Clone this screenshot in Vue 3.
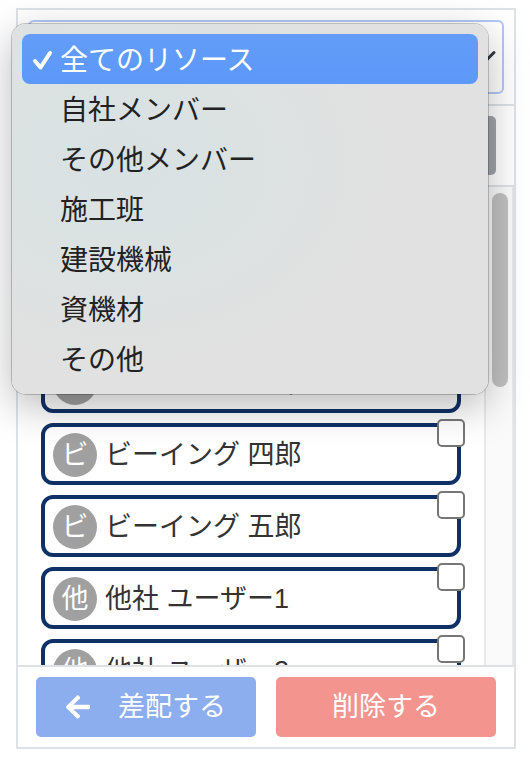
<script setup>
import { ref } from 'vue'

const categories = [
  '全てのリソース',
  '自社メンバー',
  'その他メンバー',
  '施工班',
  '建設機械',
  '資機材',
  'その他',
]
const selected = ref(categories[0])

const resources = ref([
  { id: 1, name: 'ビーイング 一郎', checked: false },
  { id: 2, name: 'ビーイング 二郎', checked: false },
  { id: 3, name: 'ビーイング 三郎', checked: false },
  { id: 4, name: 'ビーイング 四郎', checked: false },
  { id: 5, name: 'ビーイング 五郎', checked: false },
  { id: 6, name: '他社 ユーザー1', checked: false },
  { id: 7, name: '他社 ユーザー2', checked: false },
])
</script>

<template>
  <main class="page">
    <section class="panel">
      <div class="filter">
        <div class="field">
          <select v-model="selected" class="select" aria-label="リソース">
            <option v-for="c in categories" :key="c">{{ c }}</option>
          </select>
          <svg class="chevron" viewBox="0 0 16 16" aria-hidden="true">
            <path d="m2 5 6 6 6-6" />
          </svg>
          <div class="menu" role="listbox">
            <button
              v-for="c in categories"
              :key="c"
              type="button"
              role="option"
              class="option"
              :class="{ active: c === selected }"
              :aria-selected="c === selected"
              @click="selected = c"
            >
              <span class="tick">
                <svg v-if="c === selected" viewBox="0 0 22 22" aria-hidden="true">
                  <path d="M3 11 8.5 17.5 18 3" />
                </svg>
              </span>
              <span>{{ c }}</span>
            </button>
          </div>
        </div>
      </div>

      <div class="toolbar">
        <button type="button" class="tool" aria-label="検索"></button>
      </div>

      <div class="list">
        <ul class="cards">
          <li v-for="r in resources" :key="r.id" class="card">
            <label class="person" :for="'r' + r.id">
              <span class="avatar">{{ r.name[0] }}</span>
              <span class="name">{{ r.name }}</span>
            </label>
            <input :id="'r' + r.id" v-model="r.checked" type="checkbox" class="check" />
          </li>
        </ul>
        <div class="track"><div class="thumb"></div></div>
      </div>

      <footer class="actions">
        <button type="button" class="action assign">
          <svg class="arrow" viewBox="0 0 448 512" aria-hidden="true">
            <path d="M257.5 445.1l-22.2 22.2c-9.4 9.4-24.6 9.4-33.9 0L7 273c-9.4-9.4-9.4-24.6 0-33.9L201.4 44.7c9.4-9.4 24.6-9.4 33.9 0l22.2 22.2c9.5 9.5 9.3 25-.4 34.3L136.6 216H424c13.3 0 24 10.7 24 24v32c0 13.3-10.7 24-24 24H136.6l120.5 114.8c9.8 9.3 10 24.8.4 34.3z" />
          </svg>
          <span>差配する</span>
        </button>
        <button type="button" class="action remove">削除する</button>
      </footer>
    </section>
  </main>
</template>

<style>
body {
  background: #fff;
}
</style>

<style scoped>
.page,
.page * {
  box-sizing: border-box;
}
.page {
  display: flex;
  height: 100vh;
  min-height: 560px;
  padding: 8px 14px 19px 16px;
  overflow: hidden;
  font-family: "Liberation Sans", "Noto Sans CJK JP", sans-serif;
  color: #333;
}
button {
  border: 0;
  margin: 0;
  padding: 0;
  font: inherit;
  color: inherit;
  background: none;
  cursor: pointer;
}
.panel {
  flex: 1;
  min-width: 0;
  display: flex;
  flex-direction: column;
  border: 2px solid #dee2e6;
}
.filter {
  padding: 10px;
  border-bottom: 2px solid #dee2e6;
}
.field {
  position: relative;
  display: flex;
}
.select {
  appearance: none;
  flex: 1;
  min-width: 0;
  height: 74px;
  padding: 0 24px;
  border: 2px solid #b0c8f5;
  border-radius: 6px;
  background: #fff;
  font: inherit;
  font-size: 27px;
  color: #333;
}
.chevron {
  position: absolute;
  top: 25px;
  right: 7px;
  width: 24px;
  height: 24px;
  fill: none;
  stroke: #343a40;
  stroke-width: 2;
  stroke-linecap: round;
  stroke-linejoin: round;
  pointer-events: none;
}
.menu {
  position: absolute;
  z-index: 2;
  top: 4px;
  left: -16px;
  right: 16px;
  display: flex;
  flex-direction: column;
  padding: 10px;
  border-radius: 14px;
  background: radial-gradient(ellipse 260px 200px at 110px 140px, #d8e1e3 0%, #dce2e2 50%, #e1e1e1 100%);
  box-shadow: 0 0 0 1px rgba(0, 0, 0, 0.2), 0 12px 40px rgba(0, 0, 0, 0.28);
}
.option {
  display: flex;
  align-items: center;
  height: 50px;
  padding: 4px 10px 0;
  border-radius: 8px;
  font-size: 28px;
  line-height: 46px;
  color: #222;
  text-align: left;
  white-space: nowrap;
}
.option.active {
  background: linear-gradient(#639df8, #5c98f9);
  color: #fff;
}
.tick {
  display: flex;
  flex: none;
  width: 28px;
}
.tick svg {
  width: 22px;
  height: 22px;
  fill: none;
  stroke: #fff;
  stroke-width: 4;
  stroke-linecap: round;
  stroke-linejoin: round;
}
.toolbar {
  display: flex;
  padding: 10px 18px;
  border-bottom: 2px solid #dee2e6;
}
.tool {
  flex: 1;
  height: 59px;
  border-radius: 5px;
  background: #a0a5aa;
}
.list {
  flex: 1;
  min-height: 0;
  display: grid;
  grid-template-columns: minmax(0, 1fr) 30px;
  overflow: hidden;
}
.cards {
  display: flex;
  flex-direction: column;
  gap: 10px;
  min-height: 0;
  margin: 0;
  padding: 20px 23px;
  overflow: hidden;
  list-style: none;
}
.card {
  position: relative;
  flex: none;
  border: 4px solid #0f3166;
  border-radius: 12px;
  background: #fff;
}
.person {
  display: flex;
  align-items: center;
  gap: 8px;
  height: 54px;
  padding: 2px 8px 0;
}
.avatar {
  flex: none;
  width: 44px;
  height: 44px;
  border-radius: 50%;
  background: #a0a0a0;
  color: #fff;
  font-size: 27px;
  line-height: 44px;
  text-align: center;
}
.name {
  overflow: hidden;
  font-size: 27px;
  line-height: 44px;
  white-space: nowrap;
  text-overflow: ellipsis;
}
.check {
  appearance: none;
  position: absolute;
  top: -8px;
  right: -8px;
  width: 28px;
  height: 28px;
  margin: 0;
  border: 2px solid #767676;
  border-radius: 5px;
  background: #fff;
}
.check:checked {
  background: #3b82f6;
}
.track {
  min-height: 0;
  padding: 6px;
  border: solid #e8e8e8;
  border-width: 0 2px;
  background: #fafafa;
}
.thumb {
  width: 16px;
  height: 194px;
  margin: 0 auto;
  border-radius: 8px;
  background: #c1c1c1;
}
.actions {
  display: grid;
  grid-template-columns: 1fr 1fr;
  gap: 20px;
  padding: 10px 18px;
  border-top: 2px solid #dee2e6;
}
.action {
  display: flex;
  align-items: center;
  justify-content: center;
  gap: 28px;
  height: 60px;
  border-radius: 5px;
  font-size: 27px;
  line-height: 60px;
  color: #fff;
  white-space: nowrap;
}
.assign {
  background: #8cadee;
}
.remove {
  background: #f3948f;
}
.arrow {
  width: 24px;
  height: 28px;
  fill: #fff;
}
</style>
